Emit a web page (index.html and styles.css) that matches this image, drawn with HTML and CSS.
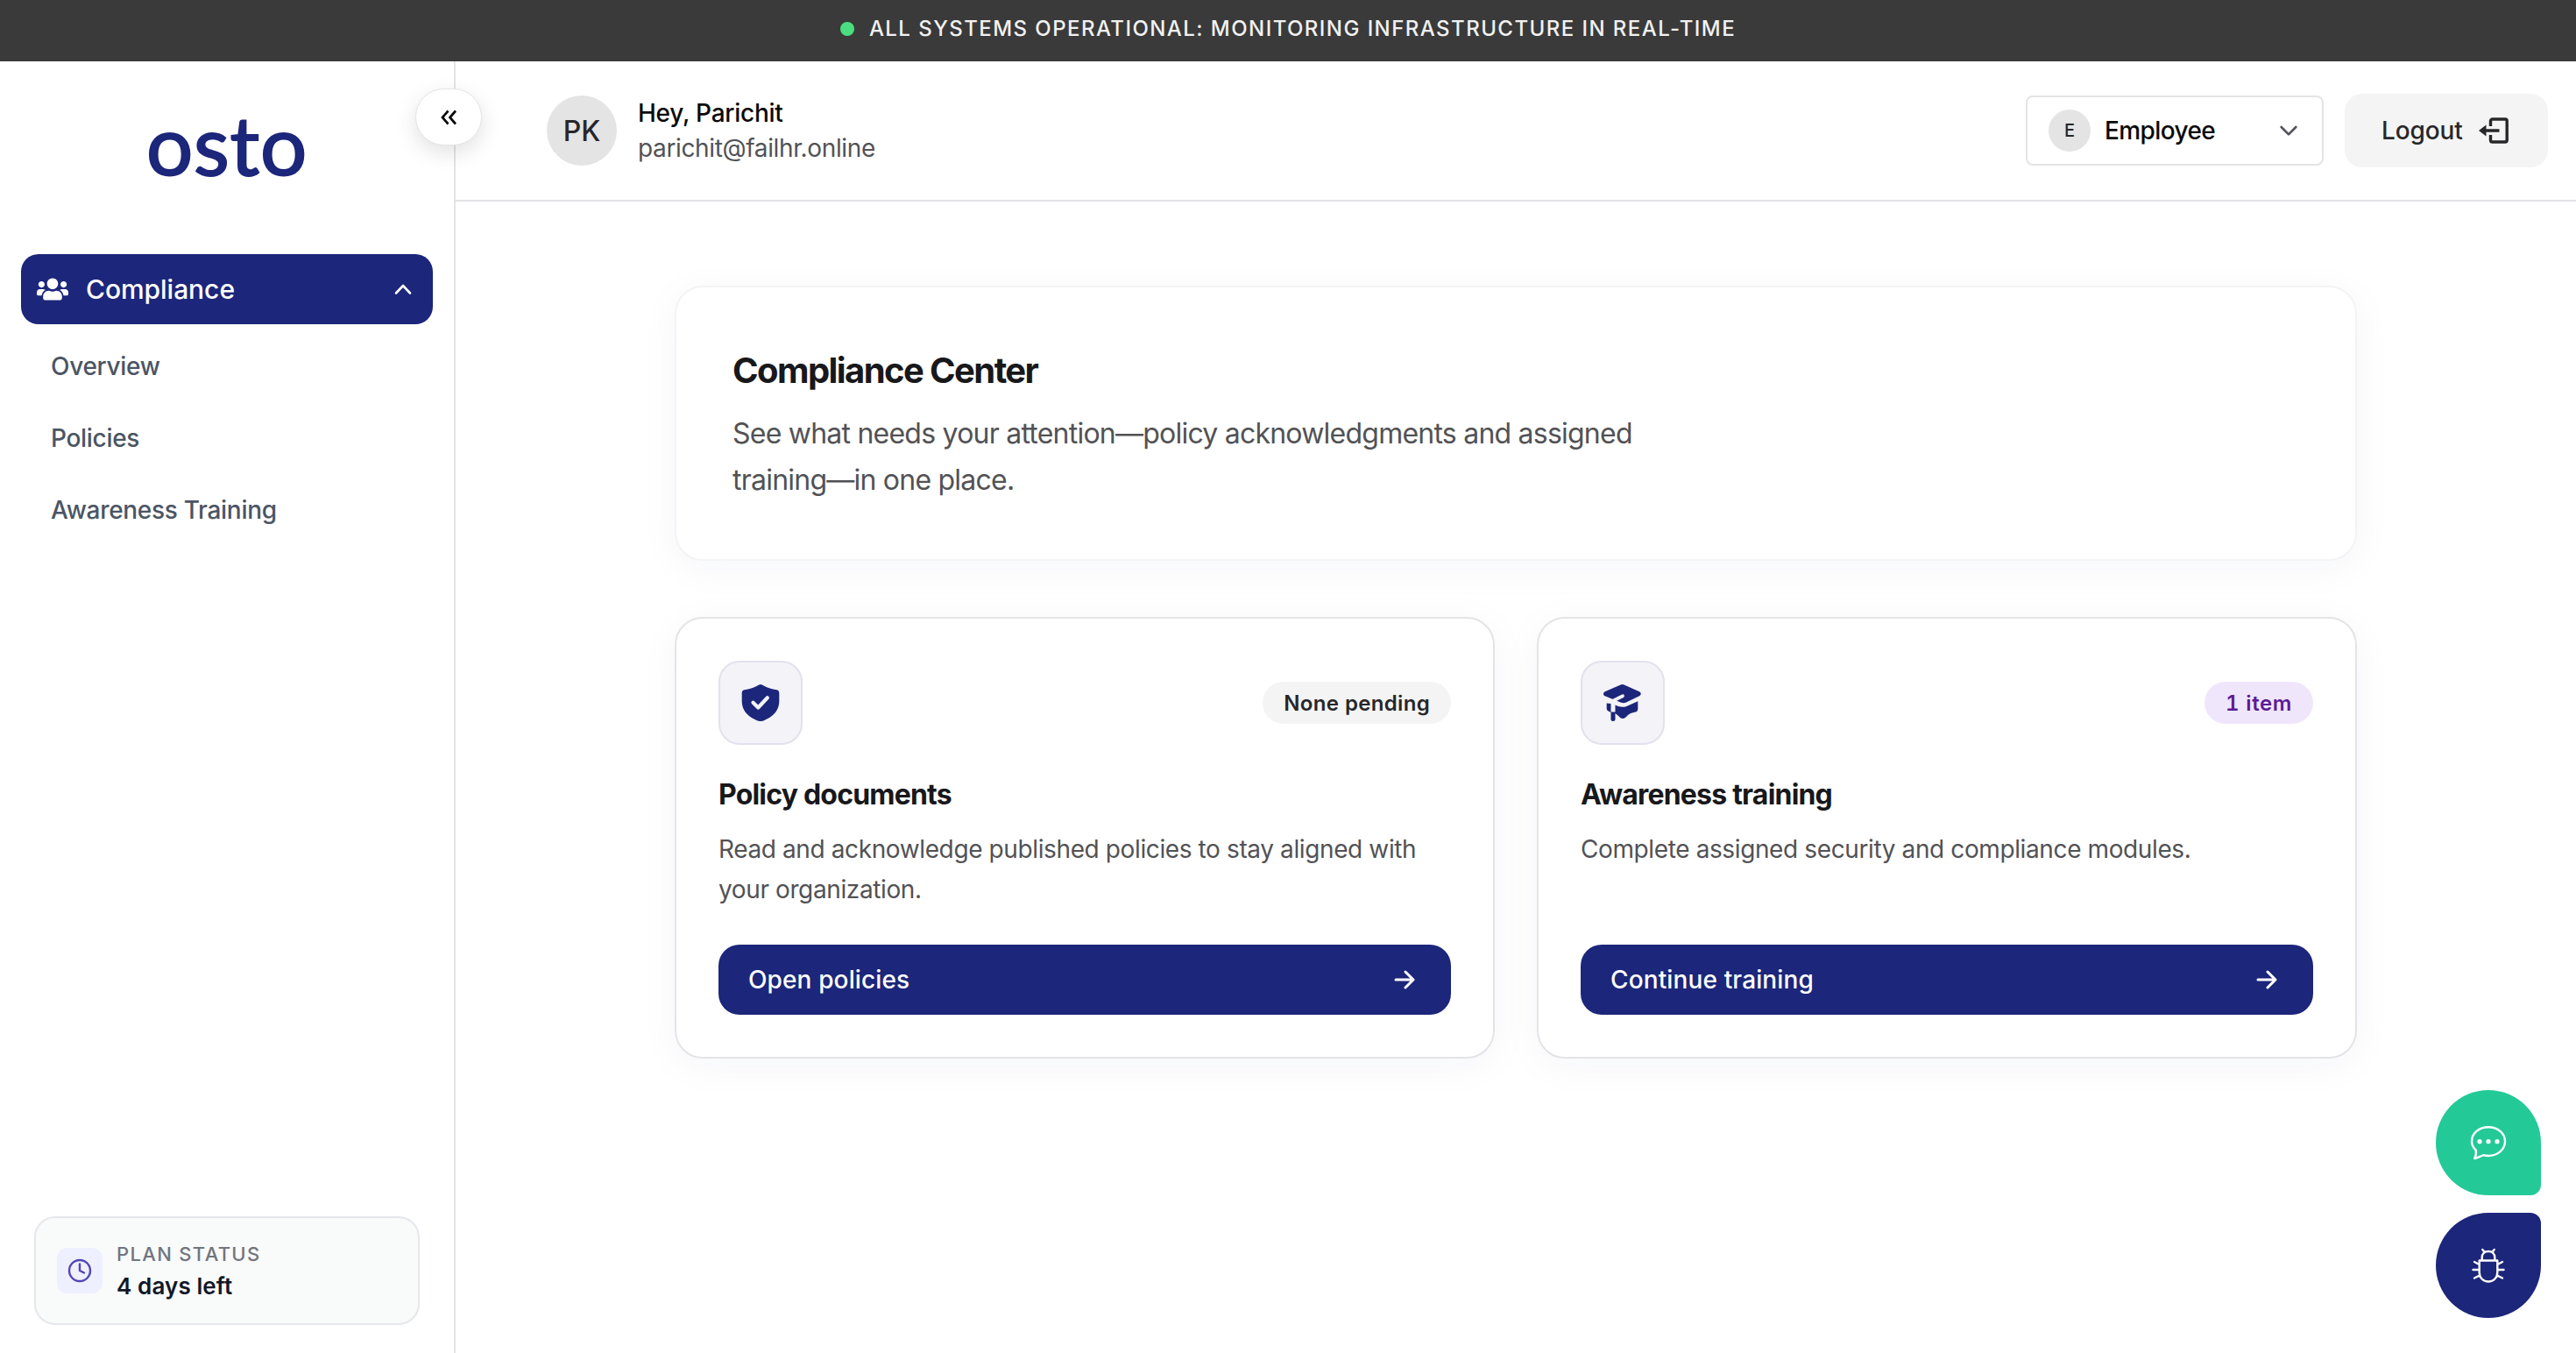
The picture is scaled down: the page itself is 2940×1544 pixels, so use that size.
FILE: index.html
```
<!DOCTYPE html>
<html lang="en">
<head>
<meta charset="utf-8">
<title>Compliance Center</title>
<link rel="stylesheet" href="styles.css">
</head>
<body>
<div class="banner"><span class="banner-dot"></span><span class="banner-text">ALL SYSTEMS OPERATIONAL: MONITORING INFRASTRUCTURE IN REAL-TIME</span></div>
<div class="shell">
  <aside class="sidebar">
    <div class="logo">osto</div>
    <button class="collapse" aria-label="Collapse sidebar">
      <svg width="20" height="18" viewBox="0 0 20 18" fill="none" stroke="#0a0a0a" stroke-width="2.700"><path d="M9.500 1.500 3 9l6.500 7.500M18 1.500 11.500 9l6.500 7.500"/></svg>
    </button>
    <nav class="nav">
      <a class="nav-group">
        <svg width="36" height="26" viewBox="0 32 640 448" fill="#fff"><path d="M96 224c35.300 0 64-28.700 64-64s-28.700-64-64-64-64 28.700-64 64 28.700 64 64 64zm448 0c35.300 0 64-28.700 64-64s-28.700-64-64-64-64 28.700-64 64 28.700 64 64 64zm32 32h-64c-17.600 0-33.500 7.100-45.100 18.600 40.300 22.100 68.900 62 75.100 109.400h66c17.700 0 32-14.300 32-32v-32c0-35.300-28.700-64-64-64zm-256 0c61.900 0 112-50.100 112-112S381.900 32 320 32 208 82.100 208 144s50.100 112 112 112zm76.800 32h-8.300c-20.800 10-43.900 16-68.500 16s-47.600-6-68.500-16h-8.300C179.600 288 128 339.600 128 403.200V432c0 26.500 21.500 48 48 48h288c26.500 0 48-21.500 48-48v-28.800c0-63.600-51.600-115.200-115.200-115.200zm-223.700-13.400C161.500 263.100 145.600 256 128 256H64c-35.300 0-64 28.700-64 64v32c0 17.700 14.300 32 32 32h65.900c6.300-47.400 34.900-87.300 75.200-109.400z"/></svg>
        <span class="nav-title">Compliance</span>
        <svg width="20" height="14" viewBox="0 0 20 14" fill="none" stroke="#fff" stroke-width="2.600" stroke-linecap="round" stroke-linejoin="round"><path d="M2 11.500 10 3l8 8.500"/></svg>
      </a>
      <a class="nav-item">Overview</a>
      <a class="nav-item">Policies</a>
      <a class="nav-item">Awareness Training</a>
    </nav>
    <div class="plan">
      <span class="plan-icon"><svg width="28" height="28" viewBox="0 0 28 28" fill="none" stroke="#5046b8" stroke-width="2.400" stroke-linecap="round" stroke-linejoin="round"><circle cx="14" cy="14" r="12"/><path d="M14 6.500V14l5 2.500"/></svg></span>
      <div><div class="plan-label">PLAN STATUS</div><div class="plan-value">4 days left</div></div>
    </div>
  </aside>
  <div class="page">
    <header class="header">
      <span class="avatar">PK</span>
      <div class="who"><div class="who-name">Hey, Parichit</div><div class="who-mail">parichit@failhr.online</div></div>
      <div class="select">
        <span class="select-badge">E</span><span class="select-value">Employee</span>
        <svg width="20" height="14" viewBox="0 0 20 14" fill="none" stroke="#52525b" stroke-width="2.600" stroke-linecap="round" stroke-linejoin="round"><path d="M1.700 3 10 11.300 18.300 3"/></svg>
      </div>
      <button class="logout"><span>Logout</span>
        <svg width="34" height="30" viewBox="0 0 34 30"><path d="M13.500 10V4a2 2 0 0 1 2-2h14.700a2 2 0 0 1 2 2v22a2 2 0 0 1-2 2H15.500a2 2 0 0 1-2-2v-6" fill="none" stroke="#27272a" stroke-width="3.400"/><path d="M0 15 8.500 8.500v4.800H23.500v3.400H8.500v4.800z" fill="#27272a"/></svg>
      </button>
    </header>
    <main class="content">
      <section class="hero">
        <h1 class="hero-title">Compliance Center</h1>
        <p class="hero-text">See what needs your attention—policy acknowledgments and assigned training—in one place.</p>
      </section>
      <div class="cards">
        <section class="card">
          <div class="card-top">
            <span class="tile"><svg width="44" height="42" viewBox="0 0 44 42"><path d="M22 0c2.500 0 6 4.500 18.500 6.200 2 .4 2.800 1.600 2.800 4V19c0 13-10 19-17.300 22.200-2.500 1.100-5.500 1.100-8 0C10.700 38 .7 32 .7 19v-8.800c0-2.400.8-3.600 2.800-4C16 4.500 19.500 0 22 0z" fill="#1c267a"/><path d="m13.500 20.800 5.800 5.700 10.500-11.300" fill="none" stroke="#f3f3f8" stroke-width="4.200" stroke-linecap="round" stroke-linejoin="round"/></svg></span>
            <span class="badge">None pending</span>
          </div>
          <h2 class="card-title">Policy documents</h2>
          <p class="card-text">Read and acknowledge published policies to stay aligned with your organization.</p>
          <a class="action"><span>Open policies</span><svg width="24" height="24" viewBox="0 0 24 24" fill="none" stroke="#fff" stroke-width="3" stroke-linecap="round" stroke-linejoin="round"><path d="M2 12h20M13 3l9 9-9 9"/></svg></a>
        </section>
        <section class="card">
          <div class="card-top">
            <span class="tile"><svg width="44" height="42" viewBox="0 0 44 42"><path d="M19 .7c1.700-.8 3.500-.8 5.200 0L41 8.300c2.300 1.300 2.300 3.700 0 5L26 20.600c-2.500 1-4.500.6-6.500-.2L1.700 13.300c-2.300-1.300-2.300-3.700 0-5z" fill="#1c267a"/><path d="M22 13.200 12 18.300c-2.800 1.500-3.300 3-3.300 6" fill="none" stroke="#f3f3f8" stroke-width="3.800" stroke-linecap="round"/><path d="M3.700 21.500 8.500 22v10l-3.300-1.700a3 3 0 0 1-1.500-2.500zM8.500 31.500h5v8a2.500 2.500 0 0 1-5 0zM13.500 23.600c4.500 2.200 9 3 13 1.300l12.800-5.600v8.500c0 2-.8 3.200-2.500 3.700-4.300 1-7 1.500-9.800 4.500-3.500 4-6.500 4-9.800 0l-3.700-3z" fill="#1c267a"/></svg></span>
            <span class="badge badge-violet">1 item</span>
          </div>
          <h2 class="card-title">Awareness training</h2>
          <p class="card-text">Complete assigned security and compliance modules.</p>
          <a class="action"><span>Continue training</span><svg width="24" height="24" viewBox="0 0 24 24" fill="none" stroke="#fff" stroke-width="3" stroke-linecap="round" stroke-linejoin="round"><path d="M2 12h20M13 3l9 9-9 9"/></svg></a>
        </section>
      </div>
    </main>
  </div>
</div>
<div class="fabs">
  <button class="fab fab-chat" aria-label="Chat"><svg width="42" height="40" viewBox="0 0 42 40" fill="none" stroke="#fff" stroke-width="2.400" stroke-linejoin="round"><path d="M5.200 38c1.700-3.500 2.300-6 1.500-9.500C3.500 25.500 2 22.300 2 18.500 2 9.300 10.300 2.200 21 2.200s19 7.100 19 16.300-8.300 16.500-19 16.500c-2 0-3.800-.3-5.500-.8-3.300 1-6.500 3-10.300 3.800z"/><g fill="#fff" stroke="none"><circle cx="11" cy="18.700" r="2.600"/><circle cx="21" cy="18.700" r="2.600"/><circle cx="31" cy="18.700" r="2.600"/></g></svg></button>
  <button class="fab fab-bug" aria-label="Report a bug"><svg width="38" height="40" viewBox="0 0 38 40" fill="none" stroke="#fff" stroke-width="2.400" stroke-linecap="round" stroke-linejoin="round"><path d="M8.700 14.500h20.600V28c0 6-4.300 10.500-10.300 10.500S8.700 34 8.700 28zM11.700 14.200V11c0-4.300 3-7 7.300-7s7.300 2.700 7.300 7v3.200M14.500 4.800 12.300 2M23.500 4.800 25.700 2M8.500 19 3 16M29.500 19 35 16M8.500 25H1.500M29.500 25h7M9 31.500 3 34.500M29 31.500 35 34.500"/></svg></button>
</div>
</body>
</html>
```
FILE: styles.css
```
* { box-sizing: border-box; margin: 0; }
body { width: 2940px; height: 1544px; overflow: hidden; background: #fff; font-family: Inter, "Liberation Sans", sans-serif; font-size: 28px; color: #18181b; display: flex; flex-direction: column; }
button { border: 0; padding: 0; font: inherit; color: inherit; }
svg { display: block; flex: none; }

.banner { flex: none; height: 70px; padding-bottom: 5px; background: #3a3a3a; display: flex; align-items: center; justify-content: center; gap: 17px; }
.banner-dot { width: 16px; height: 16px; border-radius: 50%; background: #4ade80; }
.banner-text { color: #f1f1f1; font-size: 24px; font-weight: 500; letter-spacing: 1.44px; }

.shell { flex: 1; display: flex; min-height: 0; }
.sidebar { position: relative; width: 520px; flex: none; border-right: 2px solid #e4e4e7; padding: 46px 24px 32px; display: flex; flex-direction: column; }
.logo { font: 400 94px/96px Lato, sans-serif; color: #1c267a; text-align: center; margin-bottom: 78px; letter-spacing: .8px; -webkit-text-stroke: 2px #1c267a; }
.collapse { position: absolute; left: 474px; top: 31px; width: 76px; height: 65px; border-radius: 33px; background: #fff; border: 1px solid #e4e4e7; box-shadow: 0 8px 24px rgba(0, 0, 0, .12); display: flex; align-items: center; justify-content: center; z-index: 2; }
.nav { flex: 1; }
.nav-group { height: 80px; border-radius: 20px; background: #1c267a; display: flex; align-items: center; padding: 0 24px 0 18px; margin-bottom: 7px; }
.nav-title { flex: 1; margin-left: 20px; color: #fff; font-size: 30px; font-weight: 500; letter-spacing: -.05px; }
.nav-item { display: flex; align-items: center; height: 82px; padding-left: 34px; color: #4b5563; font-weight: 450; letter-spacing: -.3px; }
.plan { height: 124px; margin: 0 15px; border: 2px solid #e5e7eb; border-radius: 24px; background: #f9fafa; display: flex; align-items: center; gap: 16px; padding-left: 24px; }
.plan-icon { width: 52px; height: 52px; border-radius: 12px; background: #eef0ff; display: flex; align-items: center; justify-content: center; }
.plan-label { font-size: 22px; line-height: 36px; font-weight: 500; letter-spacing: 1.33px; color: #71757e; }
.plan-value { font-size: 26px; line-height: 38px; font-weight: 600; letter-spacing: .1px; color: #111827; }

.page { flex: 1; min-width: 0; }
.header { height: 160px; border-bottom: 2px solid #e4e4e7; display: flex; align-items: center; padding: 0 32px 0 104px; }
.avatar { width: 80px; height: 80px; border-radius: 50%; background: #e4e4e5; display: flex; align-items: center; justify-content: center; font-size: 32px; font-weight: 450; color: #27272a; }
.who { flex: 1; margin-left: 24px; line-height: 40px; }
.who-name { font-weight: 500; color: #0a0a0a; letter-spacing: -.26px; }
.who-mail { color: #525255; letter-spacing: -.36px; }
.select { width: 340px; height: 80px; border: 2px solid #e4e4e7; border-radius: 8px; display: flex; align-items: center; padding: 0 28px 0 24px; margin-right: 24px; }
.select-badge { width: 48px; height: 48px; border-radius: 50%; background: #e4e4e5; display: flex; align-items: center; justify-content: center; font-size: 20px; font-weight: 500; color: #27272a; }
.select-value { flex: 1; margin-left: 16px; color: #0a0a0a; font-weight: 450; letter-spacing: -.6px; }
.logout { width: 232px; height: 84px; border-radius: 20px; background: #f4f4f4; color: #27272a; display: flex; align-items: center; padding-left: 42px; gap: 18px; font-weight: 450; letter-spacing: -.1px; }

.content { width: 1920px; margin: 96px auto 0; display: flex; flex-direction: column; gap: 64px; }
.hero, .card { border: 2px solid #e4e4e7; border-radius: 32px; background: #fff; box-shadow: 0 8px 48px rgba(28, 38, 122, .045); }
.hero { padding: 65px 64px 63px; border-color: #f4f4f5; }
.hero-title { font-size: 40px; line-height: 60px; font-weight: 700; letter-spacing: -1.58px; margin-bottom: 16px; }
.hero-text { max-width: 1100px; font-size: 32px; line-height: 1.65; color: #525255; letter-spacing: -.77px; }
.cards { display: grid; grid-template-columns: 1fr 1fr; gap: 48px; }
.card { padding: 48px; display: flex; flex-direction: column; }
.card-top { display: flex; align-items: center; justify-content: space-between; margin-bottom: 33px; }
.tile { width: 96px; height: 96px; border: 2px solid #e1e2ec; border-radius: 24px; background: #f3f3f8; display: flex; align-items: center; justify-content: center; }
.badge { height: 48px; border-radius: 24px; padding: 0 24px; background: #f4f4f4; color: #27272a; font-size: 24px; line-height: 49px; font-weight: 600; letter-spacing: .32px; font-variant-numeric: tabular-nums; }
.badge-violet { background: #f0e6fc; color: #5b1a96; letter-spacing: .6px; }
.card-title { font-size: 32px; line-height: 48px; font-weight: 650; letter-spacing: -.8px; margin-bottom: 15px; }
.card-text { line-height: 1.65; min-height: 92.4px; color: #525255; letter-spacing: -.385px; margin-bottom: 40px; }
.action { height: 80px; border-radius: 24px; background: #1c267a; color: #fff; font-weight: 500; letter-spacing: .13px; display: flex; align-items: center; justify-content: space-between; padding: 0 41px 0 34px; }

.fabs { position: absolute; right: 40px; bottom: 40px; display: flex; flex-direction: column; gap: 20px; }
.fab { width: 120px; height: 120px; display: flex; align-items: center; justify-content: center; }
.fab-chat { background: #24c998; border-radius: 60px 60px 12px 60px; }
.fab-bug { background: #1c267a; border-radius: 60px 12px 60px 60px; }
```
